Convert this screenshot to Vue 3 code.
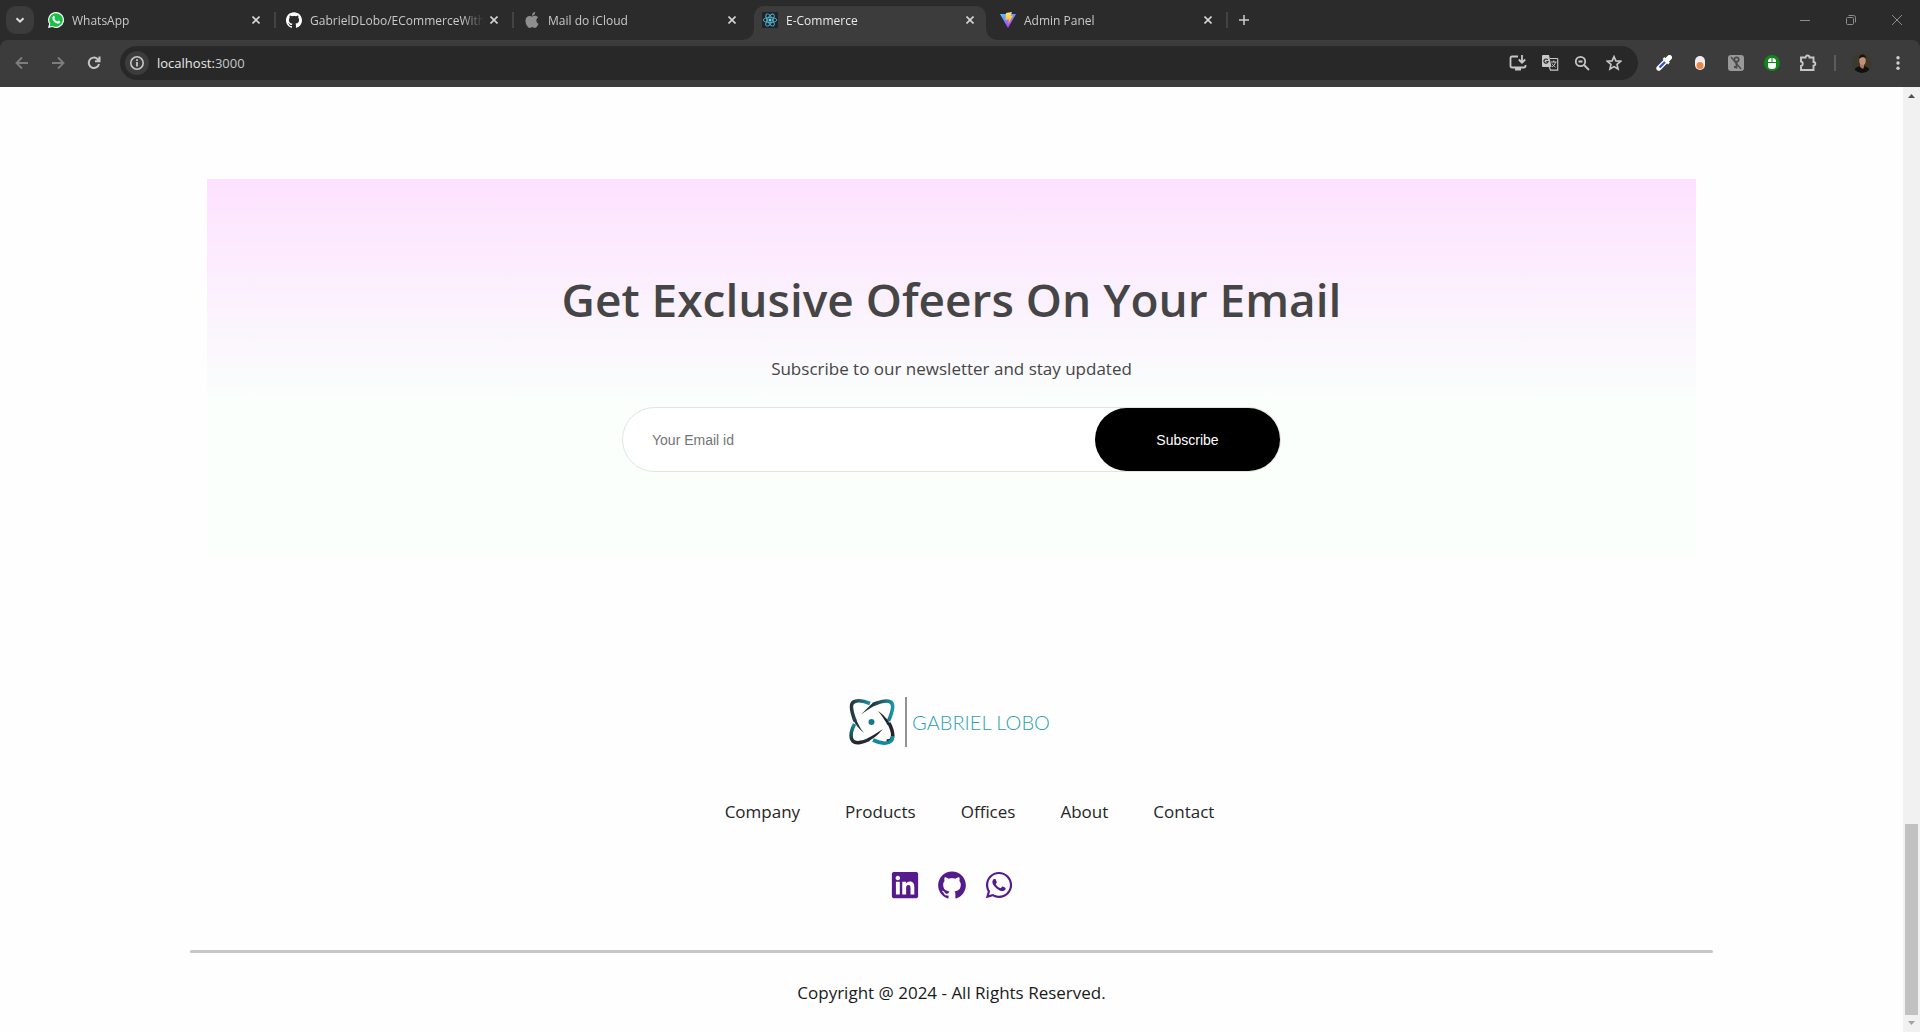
<script setup>
import { ref } from 'vue'

const email = ref('')

const tabs = [
  { title: 'WhatsApp', icon: 'whatsapp', separator: true },
  { title: 'GabrielDLobo/ECommerceWith', icon: 'github', separator: true },
  { title: 'Mail do iCloud', icon: 'apple' },
  { title: 'E-Commerce', icon: 'react', active: true },
  { title: 'Admin Panel', icon: 'vite', separator: true },
]

const links = ['Company', 'Products', 'Offices', 'About', 'Contact']

const githubPath =
  'M12 .297c-6.63 0-12 5.373-12 12 0 5.303 3.438 9.8 8.205 11.385.6.113.82-.258.82-.577 0-.285-.01-1.04-.015-2.04-3.338.724-4.042-1.61-4.042-1.61C4.422 18.07 3.633 17.7 3.633 17.7c-1.087-.744.084-.729.084-.729 1.205.084 1.838 1.236 1.838 1.236 1.07 1.835 2.809 1.305 3.495.998.108-.776.417-1.305.76-1.605-2.665-.3-5.466-1.332-5.466-5.93 0-1.31.465-2.38 1.235-3.22-.135-.303-.54-1.523.105-3.176 0 0 1.005-.322 3.3 1.23.96-.267 1.98-.399 3-.405 1.02.006 2.04.138 3 .405 2.28-1.552 3.285-1.23 3.285-1.23.645 1.653.24 2.873.12 3.176.765.84 1.23 1.91 1.23 3.22 0 4.61-2.805 5.625-5.475 5.92.42.36.81 1.096.81 2.22 0 1.606-.015 2.896-.015 3.286 0 .315.21.69.825.57C20.565 22.092 24 17.592 24 12.297c0-6.627-5.373-12-12-12'
const whatsappPath =
  'M380.9 97.1C339 55.1 283.2 32 223.9 32c-122.4 0-222 99.6-222 222 0 39.1 10.2 77.3 29.6 111L0 480l117.7-30.9c32.4 17.7 68.9 27 106.1 27h.1c122.3 0 224.1-99.6 224.1-222 0-59.3-25.2-115-67.1-157zm-157 341.6c-33.2 0-65.7-8.9-94-25.7l-6.7-4-69.8 18.3L72 359.2l-4.4-7c-18.5-29.4-28.2-63.3-28.2-98.2 0-101.7 82.8-184.5 184.6-184.5 49.3 0 95.6 19.2 130.4 54.1 34.8 34.9 56.2 81.2 56.1 130.5 0 101.8-84.9 184.6-186.6 184.6zm101.2-138.2c-5.5-2.8-32.8-16.2-37.9-18-5.1-1.9-8.8-2.8-12.5 2.8-3.7 5.6-14.3 18-17.6 21.8-3.2 3.7-6.5 4.2-12 1.4-32.6-16.3-54-29.1-75.5-66-5.7-9.8 5.7-9.1 16.3-30.3 1.8-3.7.9-6.9-.5-9.7-1.4-2.8-12.5-30.1-17.1-41.2-4.5-10.8-9.1-9.3-12.5-9.5-3.2-.2-6.9-.2-10.6-.2-3.7 0-9.7 1.4-14.8 6.9-5.1 5.6-19.4 19-19.4 46.3 0 27.3 19.9 53.7 22.6 57.4 2.8 3.7 39.1 59.7 94.8 83.8 35.2 15.2 49 16.5 66.6 13.9 10.7-1.6 32.8-13.4 37.4-26.4 4.6-13 4.6-24.1 3.2-26.4-1.3-2.5-5-3.9-10.5-6.6z'
const linkedinPath =
  'M416 32H31.9C14.3 32 0 46.5 0 64.3v383.4C0 465.5 14.3 480 31.9 480H416c17.6 0 32-14.5 32-32.3V64.3c0-17.8-14.4-32.3-32-32.3zM135.4 416H69V202.2h66.5V416zm-33.2-243c-21.3 0-38.5-17.3-38.5-38.5S80.9 96 102.2 96c21.2 0 38.5 17.3 38.5 38.5 0 21.3-17.2 38.5-38.5 38.5zm282.1 243h-66.4V312c0-24.8-.5-56.7-34.5-56.7-34.6 0-39.9 27-39.9 54.9V416h-66.4V202.2h63.7v29.2h.9c8.9-16.8 30.6-34.5 62.2-34.5 66.5 0 78.9 43.8 78.9 100.9V416z'
const applePath =
  'M18.71,19.5C17.88,20.74 17,21.95 15.66,21.97C14.32,22 13.89,21.18 12.37,21.18C10.84,21.18 10.37,21.95 9.1,22C7.79,22.05 6.8,20.68 5.96,19.47C4.25,17 2.94,12.45 4.7,9.39C5.57,7.87 7.13,6.91 8.82,6.88C10.1,6.86 11.32,7.75 12.11,7.75C12.89,7.75 14.37,6.68 15.92,6.84C16.57,6.87 18.39,7.1 19.56,8.82C19.47,8.88 17.39,10.1 17.41,12.63C17.44,15.65 20.06,16.66 20.09,16.67C20.06,16.74 19.67,18.11 18.71,19.5M13,3.5C13.73,2.67 14.94,2.04 15.94,2C16.07,3.17 15.6,4.35 14.9,5.19C14.21,6.04 13.07,6.7 11.95,6.61C11.8,5.46 12.36,4.26 13,3.5Z'
</script>

<template>
  <div class="window">
    <header class="chrome">
      <div class="tab-strip">
        <button class="tab-search" aria-label="Search tabs">
          <svg width="12" height="12" viewBox="0 0 12 12" fill="none" stroke="#dedede" stroke-width="2"><path d="M2.5 4.2 6 7.7l3.500-3.500" /></svg>
        </button>
        <div class="tabs">
          <div v-for="tab in tabs" :key="tab.title" class="tab" :class="{ active: tab.active, separated: tab.separator }">
            <svg v-if="tab.icon === 'whatsapp'" class="favicon" viewBox="0 0 16 16">
              <path fill="#fff" d="M8 0a8 8 0 1 1-3.700 15.100L0 16l1.100-4A8 8 0 0 1 8 0z" />
              <path fill="#18c246" d="M8 1.200a6.800 6.800 0 1 1-3.400 12.700l-3 .7.8-2.800A6.800 6.800 0 0 1 8 1.200z" />
              <path fill="#fff" d="M5.300 4c.4-.3.8-.3 1 .1l.7 1.500c.1.4-.5.9-.6 1.200.6 1.300 1.500 2.100 2.900 2.700.4-.1.8-1 1.200-.9l1.600.8c.4.300 0 1.500-.6 1.900-2.800 1.500-7.700-2.700-7.100-5.800.1-.6.500-1.200.9-1.500z" />
            </svg>
            <svg v-else-if="tab.icon === 'github'" class="favicon" viewBox="0 0 24 24"><path fill="#fff" :d="githubPath" /></svg>
            <svg v-else-if="tab.icon === 'apple'" class="favicon" viewBox="2 2 20 20"><path fill="#8e8e8e" :d="applePath" /></svg>
            <svg v-else-if="tab.icon === 'react'" class="favicon" viewBox="0 0 16 16">
              <rect width="16" height="16" rx="1" fill="#20232a" />
              <g fill="none" stroke="#52b5cc" stroke-width="0.9">
                <ellipse cx="8" cy="8" rx="6.800" ry="2.600" />
                <ellipse cx="8" cy="8" rx="6.800" ry="2.600" transform="rotate(60 8 8)" />
                <ellipse cx="8" cy="8" rx="6.800" ry="2.600" transform="rotate(120 8 8)" />
              </g>
              <circle cx="8" cy="8" r="1.500" fill="#61dafb" />
            </svg>
            <svg v-else class="favicon" viewBox="0 0 16 16">
              <defs>
                <linearGradient id="vite-a" x1="0" y1="0" x2=".6" y2="1"><stop stop-color="#41d1ff" /><stop offset="1" stop-color="#bd34fe" /></linearGradient>
                <linearGradient id="vite-b" x1="0" y1="0" x2="0" y2="1"><stop stop-color="#ffea83" /><stop offset="1" stop-color="#ffa800" /></linearGradient>
              </defs>
              <path fill="url(#vite-a)" d="M0 2h16L8 16z" />
              <path fill="url(#vite-b)" d="M6 1l6-1-1.500 4 2.500-.4-4.500 8.400.3-4.500L5.500 8z" />
            </svg>
            <span class="tab-title">{{ tab.title }}</span>
            <button class="tab-close" :aria-label="`Close ${tab.title}`">
              <svg width="8" height="8" viewBox="0 0 8 8" stroke="currentColor" stroke-width="1.600"><path d="M.5.500l7 7M7.500.5l-7 7" /></svg>
            </button>
          </div>
        </div>
        <button class="new-tab" aria-label="New tab">
          <svg width="10" height="10" viewBox="0 0 10 10" stroke="#d0d0d0" stroke-width="1.500"><path d="M5 0v10M0 5h10" /></svg>
        </button>
        <div class="window-controls">
          <button aria-label="Minimize"><svg width="12" height="12" viewBox="0 0 12 12"><path d="M1 6.500h10" /></svg></button>
          <button aria-label="Restore">
            <svg width="12" height="12" viewBox="0 0 12 12"><rect x="1.500" y="3.500" width="7" height="7" rx="1" /><path d="M3.500 1.500h5a2 2 0 0 1 2 2v5" /></svg>
          </button>
          <button aria-label="Close"><svg width="12" height="12" viewBox="0 0 12 12"><path d="M1 1l10 10M11 1L1 11" /></svg></button>
        </div>
      </div>

      <div class="toolbar">
        <div class="nav-buttons">
          <button aria-label="Back" class="dim"><svg class="icon" viewBox="0 0 16 16"><path d="M14 8H3M8 2.500L2.500 8 8 13.500" /></svg></button>
          <button aria-label="Forward" class="dim"><svg class="icon" viewBox="0 0 16 16"><path d="M2 8h11M8 2.500L13.500 8 8 13.500" /></svg></button>
          <button aria-label="Reload"><svg class="icon" viewBox="0 0 16 16"><path stroke-width="2" d="M13 9a5.200 5.200 0 1 1-1.500-5l1.800 1.800M13.500 1.500v4.700H9" /></svg></button>
        </div>
        <div class="omnibox">
          <button class="site-info" aria-label="Site information">
            <svg class="icon" viewBox="0 0 16 16"><circle cx="8" cy="8" r="6.200" stroke-width="1.600" /><path stroke-width="1.800" d="M8 7v4.500M8 4.300v1.800" /></svg>
          </button>
          <span class="url"><b>localhost:</b>3000</span>
          <div class="omnibox-actions">
            <button aria-label="Install">
              <svg width="18" height="16" viewBox="0 0 18 16"><path d="M9 1.500H3a1.500 1.500 0 0 0-1.500 1.500v8A1.500 1.500 0 0 0 3 12.500h12a1.500 1.500 0 0 0 1.500-1.500v-1M13 0v7M9.800 4.500L13 7.700l3.200-3.200" /><path d="M6 14.200h6" stroke-width="2.600" /></svg>
            </button>
            <button aria-label="Translate">
              <svg width="18" height="18" viewBox="0 0 18 18"><path fill="#c7c7c7" stroke="none" d="M2 1h6l2.500 12H2a1 1 0 0 1-1-1V2a1 1 0 0 1 1-1z" /><path d="M9 4.500h7a.7.7 0 0 1 .7.700v11H9.500L8.300 13" stroke-width="1.200" /><path d="M10 8h5.500M12.700 6.500V8M14.500 8c-.5 2.500-2 4-3.500 5M11 9.500c1 2 2.500 3 3.500 3.700" stroke-width="1" /><path stroke="#282828" stroke-width="1.200" d="M6.700 5.800A2.100 2.100 0 1 0 7.100 7.500H5.300" /></svg>
            </button>
            <button aria-label="Zoom">
              <svg class="icon" viewBox="0 0 16 16"><circle cx="6.500" cy="6.500" r="4.700" /><path d="M10 10l5 5M4.500 6.500h4" /></svg>
            </button>
            <button aria-label="Bookmark this page">
              <svg class="icon" viewBox="0 0 16 16"><path stroke-width="1.600" d="M8 1.600l1.900 4.300 4.700.4-3.600 3.100 1.100 4.600L8 11.600 3.900 14 5 9.400 1.400 6.300l4.700-.4z" /></svg>
            </button>
          </div>
        </div>
        <div class="extensions">
          <button aria-label="Color picker">
            <svg class="icon" viewBox="0 0 16 16"><path stroke="#fff" stroke-width="5" stroke-linecap="round" d="M2.800 13.200l7.200-7.200" /><path stroke="#3553d0" stroke-width="2.400" d="M3.500 12.500l5.500-5.500" /><path stroke="#fff" stroke-width="5" stroke-linecap="round" d="M11.500 4.500l2-2" /><path stroke="#fff" stroke-width="2.500" d="M7.500 3l5.500 5.500" /></svg>
          </button>
          <button aria-label="Toggle extension">
            <svg class="icon" viewBox="0 0 16 16"><rect x="3" y="1" width="10" height="14" rx="5" fill="#f0eef2" stroke="none" /><circle cx="8" cy="10.500" r="3.500" fill="#ee8540" stroke="none" /></svg>
          </button>
          <button aria-label="Key extension">
            <svg class="icon" viewBox="0 0 16 16"><rect width="16" height="16" rx="3" fill="#999" stroke="none" /><g stroke="#4a4a4a"><circle cx="8.500" cy="4.500" r="2.200" /><path d="M8.500 6.500v7M8.500 12H6" stroke-width="1.800" /><path d="M3 2l10 12" stroke-width="1.300" /></g></svg>
          </button>
          <button aria-label="Mouse extension">
            <svg class="icon" viewBox="0 0 16 16"><circle cx="8" cy="8" r="8" fill="#14851c" stroke="none" /><rect x="4" y="3" width="8" height="11" rx="3.500" fill="#fff" stroke="none" /><path d="M4 7.500h8M8 3v4.500" stroke="#14851c" stroke-width="1" /></svg>
          </button>
          <button aria-label="Extensions">
            <svg width="18" height="18" viewBox="0 0 18 18"><path stroke-width="1.900" d="M2 3.500h4.500a2 2 0 0 1 4 0h4V8a1.800 1.800 0 0 1 0 3.600V16H2v-4a2.300 2.300 0 0 0 0-4.500z" /></svg>
          </button>
          <span class="divider"></span>
          <button class="avatar" aria-label="Profile">
            <svg width="20" height="20" viewBox="0 0 20 20"><clipPath id="avatar-clip"><circle cx="10" cy="10" r="10" /></clipPath><g clip-path="url(#avatar-clip)" stroke="none"><rect width="20" height="20" fill="#3d3a2c" /><path d="M2 20c0-5 3-7 8-7s8 2 8 7z" fill="#111" /><path d="M8 11h4v3l-1 2-3-2z" fill="#a87860" /><ellipse cx="10.500" cy="7.500" rx="3.200" ry="4.500" fill="#c39178" /><path d="M7 6c-.5-6 7.500-6 7 0-1-2.500-5-2.500-7 0z" fill="#17120f" /></g></svg>
          </button>
          <button aria-label="Menu">
            <svg class="icon" viewBox="0 0 16 16"><g fill="#d0d0d0" stroke="none"><circle cx="8" cy="2.700" r="1.700" /><circle cx="8" cy="8" r="1.700" /><circle cx="8" cy="13.300" r="1.700" /></g></svg>
          </button>
        </div>
      </div>
    </header>

    <div class="viewport">
      <main class="page">
        <section class="newsletter">
          <h1>Get Exclusive Ofeers On Your Email</h1>
          <p>Subscribe to our newsletter and stay updated</p>
          <form class="subscribe" @submit.prevent>
            <input v-model="email" type="email" placeholder="Your Email id" aria-label="Your Email id" />
            <button type="submit">Subscribe</button>
          </form>
        </section>

        <footer class="footer">
          <div class="logo">
            <svg width="46" height="46" viewBox="0 0 46 46">
              <defs>
                <linearGradient id="arm-a" x1="0" y1="0" x2="1" y2="0"><stop stop-color="#26343c" /><stop offset="1" stop-color="#1795a8" /></linearGradient>
                <linearGradient id="arm-b" x1="0" y1="0" x2="0" y2="1"><stop stop-color="#15899b" /><stop offset="1" stop-color="#26262a" /></linearGradient>
              </defs>
              <g fill="none" stroke-width="3.600">
                <path stroke="url(#arm-a)" d="M21 4.500C13 1 6 1 3.500 4S3 14 6 22" />
                <path stroke="url(#arm-a)" d="M24 5.500C34 1.500 41 1 43 4.500S43 14 39.500 22" />
                <path stroke="#252529" d="M40 24c3 6 5 13 2.500 16.500-1 1.200-3 1.800-5 1.500" />
                <path stroke="#1389a0" d="M24 41c8 3.500 15 4 18 1 1-1 1.600-2.500 1.600-5" />
                <path stroke="url(#arm-b)" d="M5.500 25C2 32 1 38 3.500 41.500S13 44 20 40.500" />
              </g>
              <path fill="#26343c" d="M12 15.500L23.500 4l2.500 2.500C21 9 17 12 12 15.500z" />
              <path fill="#26343c" d="M4.300 21.500l3-1C9 25 11 29 15 34 10 30 7 26 4.300 21.500z" />
              <path fill="#252529" d="M29 12c6 4 9 8 12.500 13l-3 1C36 21 33 17 29 12z" />
              <path fill="#252529" d="M34 30c-5 6-9 9-14.500 12.200l-1-3C23 37 28 34 34 30z" />
              <circle cx="22.500" cy="23" r="3" fill="#17788c" />
            </svg>
            <span class="logo-rule"></span>
            <span class="logo-name">GABRIEL LOBO</span>
          </div>
          <nav>
            <ul class="footer-links">
              <li v-for="link in links" :key="link"><a href="#">{{ link }}</a></li>
            </ul>
          </nav>
          <div class="socials">
            <a href="#" aria-label="LinkedIn"><svg width="30" height="30" viewBox="-32 0 512 512"><path :d="linkedinPath" /></svg></a>
            <a href="#" aria-label="GitHub"><svg width="30" height="30" viewBox="-1 -1 26 26"><path :d="githubPath" /></svg></a>
            <a href="#" aria-label="WhatsApp"><svg width="30" height="30" viewBox="-32 0 512 512"><path :d="whatsappPath" /></svg></a>
          </div>
          <div class="copyright">
            <hr />
            <p>Copyright @ 2024 - All Rights Reserved.</p>
          </div>
        </footer>
      </main>
      <div class="scrollbar" aria-hidden="true">
        <svg width="17" height="17" viewBox="0 0 17 17"><path fill="#505050" d="M5 11h7L8.500 7z" /></svg>
        <span class="thumb"></span>
        <svg width="17" height="17" viewBox="0 0 17 17"><path fill="#a3a3a3" d="M5 6h7l-3.500 4z" /></svg>
      </div>
    </div>
  </div>
</template>

<style>
body {
  background: #fefefe;
}
</style>

<style scoped>
* {
  box-sizing: border-box;
}
.window {
  display: flex;
  flex-direction: column;
  min-height: 100vh;
  font-family: "Open Sans", "Noto Sans", sans-serif;
}
button {
  display: flex;
  align-items: center;
  justify-content: center;
  padding: 0;
  border: 0;
  background: none;
}

/* Browser chrome */
.chrome {
  background: #2b2b2b;
}
.tab-strip {
  display: flex;
  height: 40px;
  padding-left: 6px;
}
.tab-search {
  width: 28px;
  height: 28px;
  margin: 6px 3px 0 0;
  border-radius: 10px;
  background: #3c3c3c;
}
.tabs {
  display: flex;
  flex: 0 1 1190px;
  min-width: 0;
}
.tab {
  position: relative;
  display: flex;
  flex: 1 1 0;
  align-items: center;
  min-width: 0;
  padding: 0 11px;
  color: #c9c9c9;
  font-size: 12px;
  line-height: 16px;
}
.favicon {
  flex: none;
  width: 16px;
  height: 16px;
}
.tab-title {
  flex: 1;
  min-width: 0;
  margin: 0 0 0 8px;
  padding-top: 2px;
  overflow: hidden;
  white-space: nowrap;
  mask-image: linear-gradient(to right, #000 calc(100% - 24px), transparent calc(100% - 2px));
}
.tab-close {
  flex: none;
  width: 16px;
  height: 16px;
  color: #d5d5d5;
}
.tab.separated::after {
  content: "";
  position: absolute;
  right: -1px;
  top: 12px;
  width: 2px;
  height: 16px;
  background: #434343;
}
.tab.active {
  color: #eaeaea;
}
.tab.active::before {
  content: "";
  position: absolute;
  z-index: 0;
  inset: 6px 3px 0;
  border-radius: 10px 10px 0 0;
  background: #3c3c3c;
}
.tab.active::after {
  content: "";
  position: absolute;
  bottom: 0;
  left: -7px;
  right: -7px;
  height: 10px;
  background:
    radial-gradient(circle at 0 0, transparent 9px, #3c3c3c 10px) left / 10px 10px no-repeat,
    radial-gradient(circle at 100% 0, transparent 9px, #3c3c3c 10px) right / 10px 10px no-repeat;
}
.tab.active > * {
  z-index: 1;
}
.new-tab {
  width: 28px;
  height: 28px;
  margin: 6px 0 0 3px;
}
.window-controls {
  display: flex;
  margin-left: auto;
}
.window-controls button {
  width: 46px;
}
.window-controls svg {
  fill: none;
  stroke: #8d8d8d;
}
.toolbar {
  display: flex;
  align-items: center;
  height: 47px;
  padding: 0 4px 1px;
  border-radius: 8px 8px 0 0;
  background: #3c3c3c;
}
.toolbar svg {
  fill: none;
  stroke: #c7c7c7;
  stroke-width: 1.8;
}
.icon {
  width: 16px;
  height: 16px;
}
.nav-buttons {
  display: flex;
  margin-right: 8px;
}
.nav-buttons button {
  width: 36px;
  height: 34px;
}
.toolbar .dim svg {
  stroke: #7d7d7d;
}
.omnibox {
  display: flex;
  flex: 1;
  align-items: center;
  height: 34px;
  padding: 0 8px 0 5px;
  border-radius: 17px;
  background: #282828;
}
.site-info {
  width: 24px;
  height: 24px;
  border-radius: 12px;
  background: #3c3c3c;
}
.url {
  margin-left: 8px;
  color: #c7c7c7;
  font-size: 13px;
  line-height: 20px;
}
.url b {
  color: #e8e8e8;
  font-weight: 400;
}
.omnibox-actions {
  display: flex;
  margin-left: auto;
}
.omnibox-actions button {
  width: 32px;
  height: 32px;
}
.extensions {
  display: flex;
  align-items: center;
  margin-left: 8px;
}
.extensions button {
  width: 36px;
  height: 34px;
}
.divider {
  width: 2px;
  height: 16px;
  margin: 0 8px;
  background: #5c5c5c;
}

/* Store page */
.viewport {
  display: flex;
  flex: 1;
}
.page {
  flex: 1;
  background: #fefefe;
}
.newsletter {
  display: flex;
  flex-direction: column;
  align-items: center;
  margin: 92px 207px 140px;
  padding: 80px 0 85px;
  background: linear-gradient(180deg, #fde1ff 0%, #fafffc 60%);
}
.newsletter h1 {
  margin: 0;
  color: #454545;
  font-size: 46px;
  font-weight: 600;
  line-height: 80px;
}
.newsletter p {
  margin: 15px 0 23px;
  color: #454545;
  font-size: 17px;
  line-height: 30px;
}
.subscribe {
  display: flex;
  width: 659px;
  height: 65px;
  border: 1px solid #e3e3e3;
  border-radius: 33px;
  background: #fff;
}
.subscribe input {
  flex: 1;
  min-width: 0;
  padding: 0 0 0 29px;
  border: 0;
  outline: 0;
  background: none;
  color: #616161;
  font: 14px/20px "Liberation Sans", Arial, sans-serif;
}
.subscribe input::placeholder {
  color: #757575;
}
.subscribe button {
  width: 185px;
  border-radius: 32px;
  background: #000;
  color: #fff;
  font: 14px/20px "Liberation Sans", Arial, sans-serif;
}
.footer {
  display: flex;
  flex-direction: column;
  align-items: center;
}
.logo {
  display: flex;
  align-items: center;
  height: 50px;
  padding-right: 4px;
}
.logo-rule {
  width: 2px;
  height: 50px;
  margin: 0 5px 0 10px;
  background: #929292;
}
.logo-name {
  color: #2b9fb3;
  font-family: Lato, sans-serif;
  font-size: 20px;
  font-weight: 300;
  line-height: 24px;
}
.footer-links {
  display: flex;
  gap: 45px;
  margin: 50px 0 43px;
  padding: 0 0 0 36px;
  list-style: none;
  font-size: 17px;
  line-height: 30px;
}
.footer-links a {
  color: #252525;
  text-decoration: none;
}
.socials {
  display: flex;
  gap: 17px;
}
.socials a {
  display: flex;
}
.socials svg {
  fill: #551a8b;
}
.copyright {
  align-self: stretch;
  text-align: center;
}
.copyright hr {
  height: 3px;
  margin: 50px 190px 25px;
  border: 0;
  border-radius: 10px;
  background: #c7c7c7;
}
.copyright p {
  margin: 0;
  color: #1a1a1a;
  font-size: 17px;
  line-height: 30px;
}
.scrollbar {
  display: flex;
  flex-direction: column;
  align-items: center;
  width: 17px;
  background: #f1f1f1;
}
.thumb {
  width: 13px;
  height: 191px;
  margin-top: auto;
  background: #c1c1c1;
}
</style>
